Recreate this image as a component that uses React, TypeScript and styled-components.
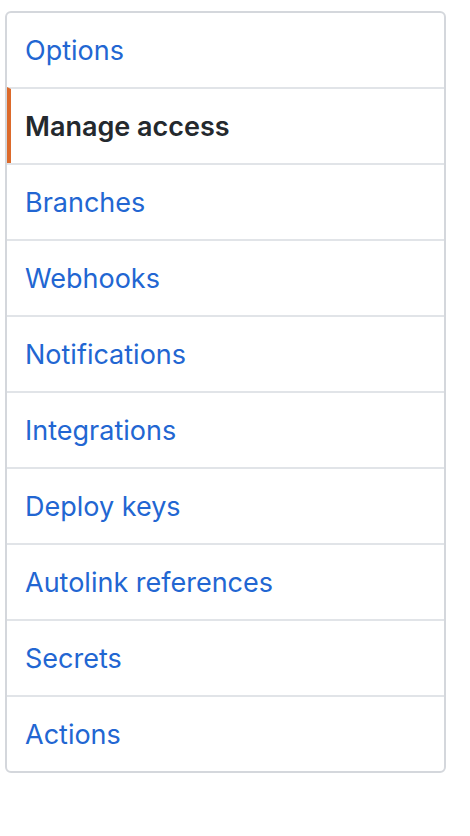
import React from 'react';
import styled, { createGlobalStyle } from 'styled-components';

const GlobalStyle = createGlobalStyle`
  body {
    margin: 0;
    background: #ffffff;
    font-family: Inter, "Noto Sans", sans-serif;
  }
`;

const Page = styled.div`
  padding: 11px 24px 0 5px;
`;

const Menu = styled.nav`
  display: flex;
  flex-direction: column;
  border: 2px solid #d4d7dc;
  border-radius: 6px;
  overflow: hidden;
  background: #ffffff;
`;

const MenuItem = styled.a<{ $selected?: boolean }>`
  display: flex;
  align-items: center;
  height: 74px;
  padding-left: ${(props) => (props.$selected ? '14px' : '18px')};
  border-left: ${(props) => (props.$selected ? '4px solid #dc6a2b' : 'none')};
  border-top: 2px solid #e1e4e8;
  font-size: 27px;
  font-weight: ${(props) => (props.$selected ? 600 : 400)};
  color: ${(props) => (props.$selected ? '#24292e' : '#2266d2')};
  text-decoration: none;
  cursor: pointer;

  &:first-child {
    border-top: none;
  }
`;

const items = [
  'Options',
  'Manage access',
  'Branches',
  'Webhooks',
  'Notifications',
  'Integrations',
  'Deploy keys',
  'Autolink references',
  'Secrets',
  'Actions',
];

const App = () => {
  return (
    <>
      <GlobalStyle />
      <Page>
        <Menu>
          {items.map((item) => (
            <MenuItem key={item} $selected={item === 'Manage access'}>
              {item}
            </MenuItem>
          ))}
        </Menu>
      </Page>
    </>
  );
};

export default App;
